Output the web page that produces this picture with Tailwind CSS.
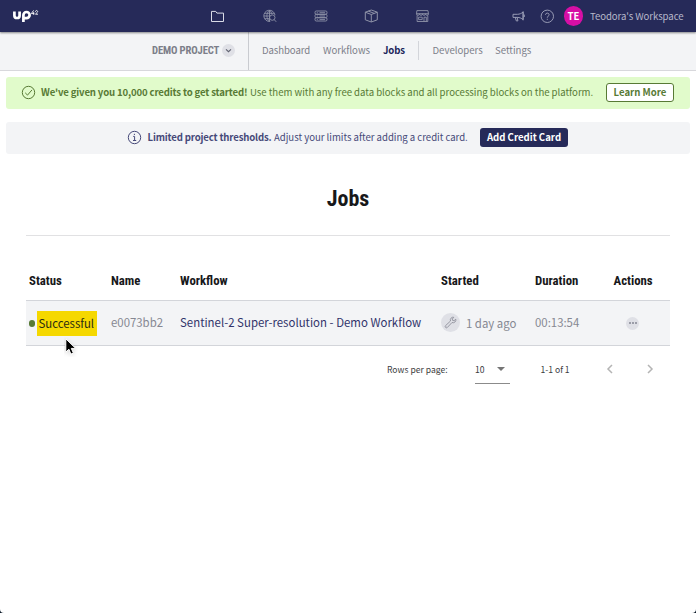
<!DOCTYPE html>
<html lang="en">
<head>
<meta charset="utf-8">
<title>Jobs</title>
<script src="https://cdn.jsdelivr.net/npm/@tailwindcss/browser@4"></script>
</head>
<body class="bg-[#0d1b2a]">
<div class="relative w-[696px] h-[613px] overflow-hidden rounded-b-[4px] bg-white font-['Noto_Sans_CJK_SC',sans-serif] text-[9.6px] leading-[16px] whitespace-nowrap">
  <header class="relative z-10 flex h-8 items-center bg-[#262a59] pb-px shadow-[0_1px_2px_rgba(0,0,0,.45)]">
    <svg class="ml-[12px] h-[14px] w-[28px] shrink-0" viewBox="0 0 28 14" fill="none" stroke="#fff" aria-label="UP42">
      <g stroke-width="2.7"><path d="M2.4 2.6v3.8a2.6 2.6 0 0 0 5.2 0V2.6"/><path d="M11.4 12.9V6.1a3.1 3.1 0 1 1 3.1 3.1h-2.2"/></g>
      <path stroke-width=".9" d="M21.6 1.400 19.300 4.600h3M21.700 3v2.800M23.400 2.700c0-1.600 2.400-1.500 2.200 0-.1.900-1.700 1.600-2.200 2.500h2.600"/>
    </svg>
    <nav class="ml-[170px] flex w-[220px] items-center justify-between text-[#8f93a8]">
      <svg class="h-4 w-[15px]" viewBox="0 0 15 16" fill="none" stroke="#d9dbe6" stroke-width="1"><path d="M1.500 13.500V3.400h4.200l1.200 1.700h6.600v8.400z" stroke-linejoin="round"/></svg>
      <svg class="ml-[2px] h-4 w-4" viewBox="0 0 16 16" fill="none" stroke="currentColor" stroke-width=".9"><path d="M8.200 13.400A5.600 5.600 0 1 1 13 7.200M7.500 2.300c-3.500 3-3.500 8 0 11M7.500 2.300C8.900 3.500 9.700 4.900 9.900 6.300M7.500 2.300v11M2.700 5.300h9.400M1.900 8h5M2.700 10.700h4.300"/><circle cx="10.300" cy="9.600" r="2.700"/><path d="m12.200 11.600 2 2.200"/></svg>
      <svg class="h-4 w-4" viewBox="0 0 16 16" fill="none" stroke="currentColor" stroke-width=".9"><rect x="2" y="3" width="12" height="3.300" rx="1.300"/><rect x="2" y="6.300" width="12" height="3.400" rx="1.300"/><rect x="2" y="9.700" width="12" height="3.300" rx="1.300"/><path d="M3.800 4.700h1M6.500 4.700H12M3.800 8h1M6.500 8H12M3.800 11.400h1M6.500 11.400H12"/></svg>
      <svg class="h-4 w-4" viewBox="0 0 16 16" fill="none" stroke="currentColor" stroke-width="1" stroke-linejoin="round"><path d="m8.300 2 6 2.200v7.600l-6 2.200-6-2.200V4.200zM2.300 4.200l6 2.300 6-2.300M8.300 6.500V14M5.300 3.100l6 2.300"/></svg>
      <svg class="h-4 w-4" viewBox="0 0 16 16" fill="none" stroke="currentColor" stroke-width=".9"><path d="M2.900 2.600h11l.6 3.200a1.500 1.500 0 0 1-3 0 1.500 1.500 0 0 1-3 0 1.500 1.500 0 0 1-3 0 1.500 1.500 0 0 1-3 0zM2.300 5.700h12.200M3.100 7.400v6.100h10.700V7.400M4.600 9.200h3.600v2.400H4.600zM10 13.500V9.200h2.300v4.300"/></svg>
    </nav>
    <svg class="ml-[81px] h-4 w-4 text-[#a3a6bd]" viewBox="0 0 16 16" fill="none" stroke="currentColor" stroke-width=".9" stroke-linejoin="round"><path d="M2 6.300h4.500c2 0 4-.9 5.600-2.200v7.500C10.500 10.300 8.500 9.400 6.500 9.400H2zM4.300 9.400l1 3.500h1.600l-.7-3.500M12.100 3.300v9M13.300 6.600v2.400"/></svg>
    <svg class="ml-[12px] h-4 w-4 text-[#a3a6bd]" viewBox="0 0 16 16" fill="none" stroke="currentColor" stroke-width=".9"><circle cx="8.300" cy="8.300" r="6.200"/><path d="M6.500 6.800c0-2.300 3.700-2.200 3.600 0-.1 1.300-1.800 1.400-1.800 2.900M8.300 10.800v1.100"/></svg>
    <div class="ml-[9px] mt-px flex h-[20px] w-[19px] items-center justify-center rounded-full bg-[#d70fa5] pb-px font-bold text-white">TE</div>
    <span class="ml-[7px] tracking-[-0.07px] text-[#b6b8ca]">Teodora's Workspace</span>
  </header>

  <div class="flex h-[39px] items-center border-b border-[#d8d8dc] bg-[#f3f4f6] pb-[2px] text-[#7c7e89]">
    <div class="-mb-[2px] flex h-[38px] w-[249px] items-center border-r border-[#c9cbd0] pb-px pl-[152px]">
      <span class="w-[67px] font-['Roboto_Condensed',Roboto,sans-serif] text-[10.7px] font-bold tracking-[-0.14px]">DEMO PROJECT</span>
      <span class="ml-[3px] flex h-[13px] w-[13px] items-center justify-center rounded-full bg-[#dfe0e6]"><svg class="h-[7px] w-[7px]" viewBox="0 0 7 7" fill="none" stroke="#5f6170" stroke-width="1.100"><path d="m1 2.300 2.500 2.400L6 2.300"/></svg></span>
    </div>
    <span class="ml-[13px] w-[61px] tracking-[-0.08px]">Dashboard</span>
    <span class="w-[60px]">Workflows</span>
    <span class="w-[35px] font-bold tracking-[-0.1px] text-[#20245a]">Jobs</span>
    <span class="h-[19px] w-px bg-[#d3d5da]"></span>
    <span class="ml-[13.500px] w-[62.500px]">Developers</span>
    <span>Settings</span>
  </div>

  <section class="mx-[6px] mt-[6px] flex h-8 items-center rounded-[3px] bg-[#e1fbcb] pl-[15px] pb-[2px] text-[#587a35]">
    <svg class="mt-px h-[15px] w-[15px]" viewBox="0 0 15 15" fill="none" stroke="currentColor" stroke-width="1"><circle cx="7.500" cy="7.500" r="6.200"/><path d="m4.200 7.800 2.300 2.300 4.500-5.200"/></svg>
    <span class="ml-[5px] w-[209px] font-bold tracking-[-0.15px]">We've given you 10,000 credits to get started!</span>
    <span class="w-[356px] tracking-[-0.015px]">Use them with any free data blocks and all processing blocks on the platform.</span>
    <button class="mt-px flex h-[19px] w-[68px] items-center justify-center rounded-[3px] border border-[#587a35] bg-white pb-px font-bold">Learn More</button>
  </section>

  <section class="mx-[6px] mt-[13px] flex h-8 items-center rounded-[3px] bg-[#f3f4f6] pl-[121px] pb-[2px] text-[#464979]">
    <svg class="mt-px h-[15px] w-[15px]" viewBox="0 0 15 15" fill="none" stroke="currentColor" stroke-width="1"><circle cx="7.500" cy="7.500" r="6.200"/><path d="M6.200 6.400h1.400v4.100M6 10.500h3.200M7.400 3.800v1.200"/></svg>
    <span class="ml-[5.500px] w-[126.500px] font-bold tracking-[-0.15px]">Limited project thresholds.</span>
    <span class="w-[206px] tracking-[-0.015px]">Adjust your limits after adding a credit card.</span>
    <button class="mt-px flex h-[19px] w-[88px] items-center justify-center rounded-[3px] bg-[#262a59] pb-px font-bold text-white">Add Credit Card</button>
  </section>

  <main class="px-[26px] text-[11.400px]">
    <h1 class="flex h-[82px] items-center justify-center border-b border-[#e1e1e3] pt-[8px] font-['Roboto_Condensed',Roboto,sans-serif] text-[22px] font-bold text-[#17181a]">Jobs</h1>
    <div class="mt-[25px] grid h-[39px] grid-cols-[82px_69px_261px_94px_79px_1fr] items-center pl-[3px] pt-px font-['Roboto_Condensed',Roboto,sans-serif] text-[12.800px] font-bold text-[#17181a]">
      <span>Status</span><span>Name</span><span>Workflow</span><span>Started</span><span>Duration</span><span class="-ml-[0.500px]">Actions</span>
    </div>
    <div class="grid h-[46px] grid-cols-[82px_69px_261px_94px_79px_1fr] items-center border-y border-[#d3d5da] bg-[#f3f4f6] pb-[2px] pl-[3px] text-[#868892]">
      <div class="mt-[2px] flex items-center"><span class="h-[7px] w-[6px] rounded-full bg-[#587a35]"></span><span class="ml-[2px] flex h-[25px] w-[60px] items-center bg-[#f5d800] pb-px pl-[1.500px] text-[#2a2b12]">Successful</span></div>
      <span>e0073bb2</span>
      <a class="tracking-[0.03px] text-[#30336a]">Sentinel-2 Super-resolution - Demo Workflow</a>
      <div class="flex items-center">
        <span class="flex h-[19px] w-[19px] items-center justify-center rounded-full bg-[#dfe0e6]"><svg class="h-[13px] w-[13px]" viewBox="0 0 13 13" fill="none" stroke="#8e909b" stroke-width=".9" stroke-linejoin="round"><path d="M9.800 1.300a2.800 2.800 0 0 0-3.300 3.700L1.400 9.800a1.300 1.300 0 0 0 1.800 1.800L8 6.500a2.800 2.800 0 0 0 3.800-3.300L10 4.700 8.600 4.400 8.300 3zM2.400 10.500h.3"/></svg></span>
        <span class="ml-[6px] pt-[2px]">1 day ago</span>
      </div>
      <span>00:13:54</span>
      <span class="ml-[12px] mt-[2px] flex h-[13px] w-[13px] items-center justify-center gap-px rounded-full bg-[#dfe0e6]"><i class="size-[2px] rounded-full bg-[#858793]"></i><i class="size-[2px] rounded-full bg-[#858793]"></i><i class="size-[2px] rounded-full bg-[#858793]"></i></span>
    </div>
    <div class="flex h-[45px] items-center pl-[361px] text-[8.600px] text-[#3c3c3e]">
      <span class="w-[88px]">Rows per page:</span>
      <span class="mt-[2px] flex h-[28px] w-[35px] items-center justify-between border-b border-[#8b8b8b] pr-[5px] pb-px">10<i class="h-0 w-0 border-x-[4px] border-t-[4px] border-x-transparent border-t-[#757575]"></i></span>
      <span class="ml-[30.500px] w-[64px]">1-1 of 1</span>
      <svg class="h-[12px] w-[10px]" viewBox="0 0 10 12" fill="none" stroke="#b4b4b4" stroke-width="1.500"><path d="M7 2 3 6l4 4"/></svg>
      <svg class="ml-[30px] h-[12px] w-[10px]" viewBox="0 0 10 12" fill="none" stroke="#b4b4b4" stroke-width="1.500"><path d="m3 2 4 4-4 4"/></svg>
    </div>
  </main>

  <svg class="absolute left-[64px] top-[337px] h-[20px] w-[14px]" viewBox="0 0 14 20"><path d="M1.800 1.800v13.400l3.100-3 2 4.900 2.500-1-2.100-4.700h4.400z" fill="#000" stroke="#fff" stroke-width="1" class="drop-shadow-sm"/></svg>
</div>
</body>
</html>
